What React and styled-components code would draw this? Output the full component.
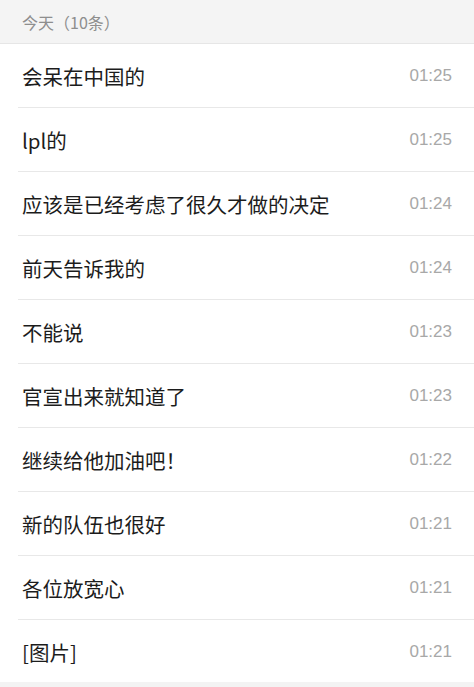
import React from 'react';
import styled, { createGlobalStyle } from 'styled-components';

const messages = [
  { text: '会呆在中国的', time: '01:25' },
  { text: 'lpl的', time: '01:25' },
  { text: '应该是已经考虑了很久才做的决定', time: '01:24' },
  { text: '前天告诉我的', time: '01:24' },
  { text: '不能说', time: '01:23' },
  { text: '官宣出来就知道了', time: '01:23' },
  { text: '继续给他加油吧！', time: '01:22' },
  { text: '新的队伍也很好', time: '01:21' },
  { text: '各位放宽心', time: '01:21' },
  { text: '[图片]', time: '01:21' },
];

const GlobalStyle = createGlobalStyle`
  html, body {
    margin: 0;
    padding: 0;
    background: #ffffff;
    font-family: "Noto Sans CJK SC", "Noto Sans", sans-serif;
  }
`;

const Page = styled.div`
  width: 474px;
  height: 687px;
  overflow: hidden;
  background: #fff;
  border-bottom: 5px solid #f3f3f3;
  box-sizing: border-box;
`;

const Header = styled.div`
  height: 44px;
  display: flex;
  align-items: center;
  padding-left: 22px;
  background: #f4f4f4;
  border-bottom: 1px solid #e6e6e6;
  box-sizing: border-box;
  color: #8e8e8e;
  font-size: 16px;
`;

const List = styled.ul`
  list-style: none;
  margin: 0;
  padding: 0 0 0 18px;
`;

const Row = styled.li`
  height: 64px;
  display: flex;
  align-items: center;
  justify-content: space-between;
  padding: 0 22px 0 4px;
  border-bottom: 1px solid #e8e8e8;
  box-sizing: border-box;
`;

const Text = styled.span`
  font-size: 20.5px;
  color: #1c1c1c;
`;

const Time = styled.span`
  font-family: "Liberation Sans", Arial, sans-serif;
  font-size: 17px;
  color: #a8a8a8;
`;

export default function App() {
  return (
    <>
      <GlobalStyle />
      <Page>
        <Header>今天（10条）</Header>
        <List>
          {messages.map((m, i) => (
            <Row key={i}>
              <Text>{m.text}</Text>
              <Time>{m.time}</Time>
            </Row>
          ))}
        </List>
      </Page>
    </>
  );
}
